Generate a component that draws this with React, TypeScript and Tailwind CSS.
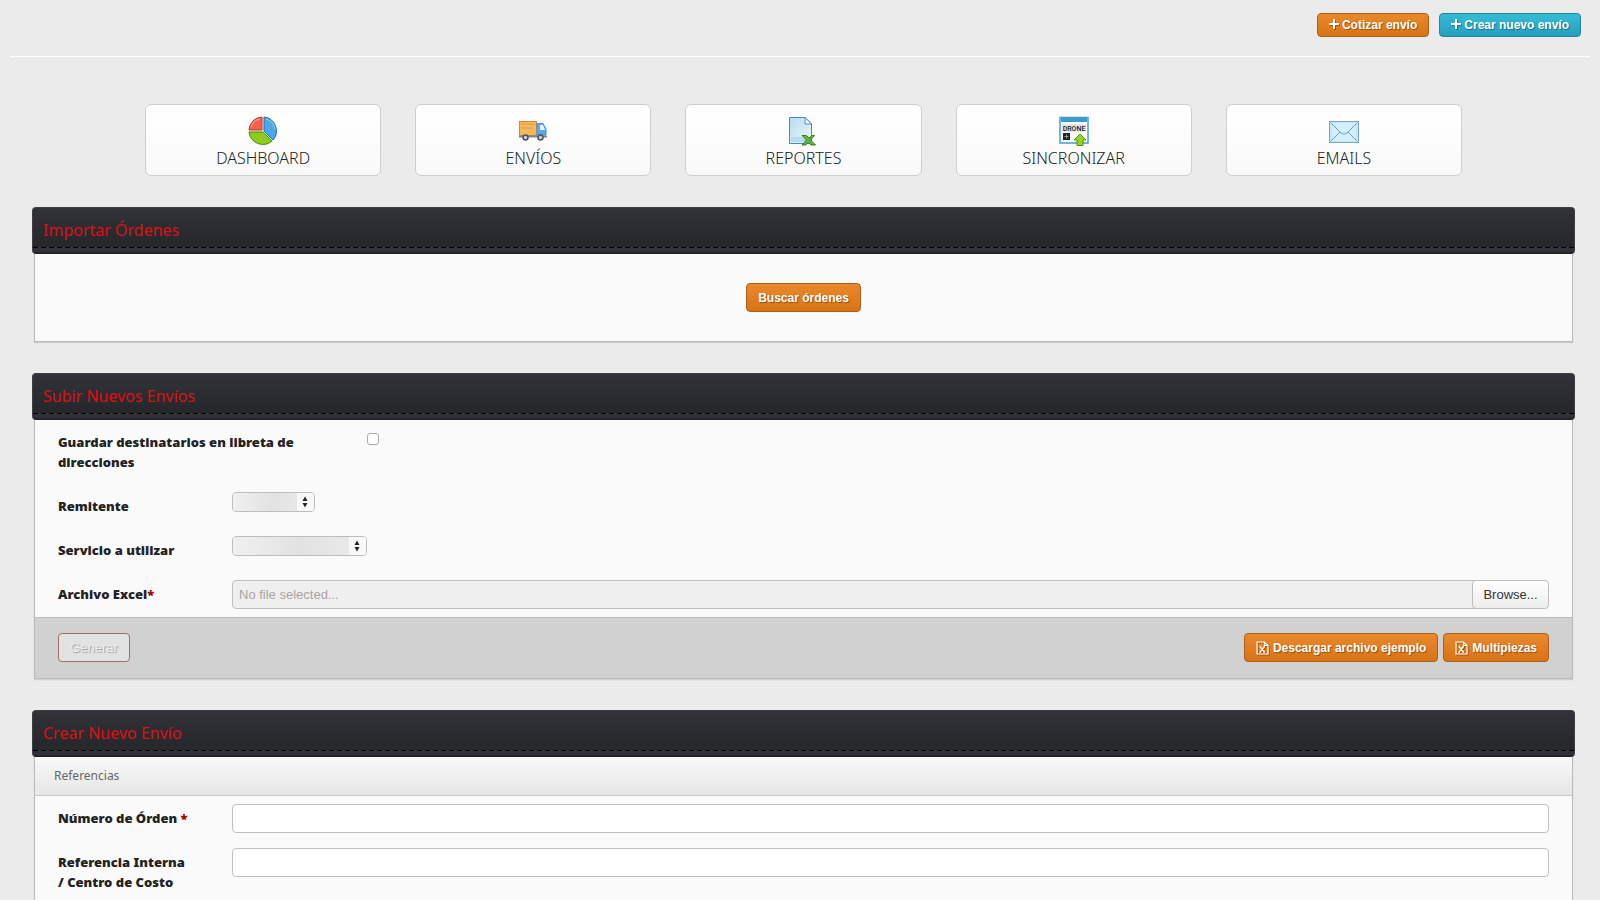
import React from 'react';

interface NavItem {
  label: string;
  icon: React.ReactNode;
}

const PieIcon = () => (
  <svg width="30" height="32" viewBox="0 0 30 32">
    <circle cx="15" cy="16" r="14.5" fill="#e8eef2" />
    <path d="M14 15V2A13.5 13.5 0 0 0 1 15Z" fill="#f4624f" stroke="#c43c2e" />
    <path d="M16 16V2A14 14 0 0 1 25 25Z" fill="#4ba8e6" stroke="#1f6fae" />
    <path d="M14 17H1A14 14 0 0 0 24 26L15 17Z" fill="#8ecb1c" stroke="#4d8a12" />
    <path d="M3 12A12 12 0 0 1 12 4M18 4A12 12 0 0 1 27 14" fill="none" stroke="#fff" strokeOpacity=".45" />
  </svg>
);

const TruckIcon = () => (
  <svg width="30" height="32" viewBox="0 0 30 32">
    <rect x="1.5" y="6.5" width="17" height="14" fill="#f9b65c" stroke="#d08a38" />
    <path d="M3 9H17M3 13H15" stroke="#e09a42" />
    <path d="M19 8.5H25L28 14V20H19Z" fill="#55aaf0" stroke="#4b92d2" />
    <path d="M22 10H25L27 15H22Z" fill="#e4f4fe" />
    <path d="M1 21.5H29" stroke="#7d858f" strokeWidth="2" />
    <circle cx="7.5" cy="22.5" r="2.5" fill="#c9ced4" stroke="#4d545e" strokeWidth="1.5" />
    <circle cx="22.5" cy="22.5" r="2.5" fill="#c9ced4" stroke="#4d545e" strokeWidth="1.5" />
  </svg>
);

const ReportIcon = () => (
  <svg width="30" height="32" viewBox="0 0 30 32">
    <defs>
      <linearGradient id="sheet" x1="0" y1="0" x2="1" y2="1">
        <stop offset="0" stopColor="#b5dcf0" />
        <stop offset="1" stopColor="#eef8fd" />
      </linearGradient>
    </defs>
    <path d="M1.5 2.5H17L23.5 9V28.5H1.5Z" fill="url(#sheet)" stroke="#3e8fc2" />
    <path d="M3 22H22V27H3Z" fill="#b5dcf0" />
    <path d="M17 2.5V9H23.5Z" fill="#fff" stroke="#3e8fc2" />
    <path d="M14 20.5H18.5L21 23L24 20.5H26.500L22.500 25L27.500 30H23L20.500 27.500L17.500 30H14L18.500 25Z" fill="#5fb43a" stroke="#37801f" />
  </svg>
);

const SyncIcon = () => (
  <svg width="30" height="32" viewBox="0 0 30 32">
    <rect x="1" y="2.5" width="28" height="25.5" fill="#fdfeff" stroke="#4a9bcb" strokeWidth="1.5" />
    <rect x="2" y="3" width="26" height="4" fill="#3a9ad2" />
    <rect x="3" y="9" width="24" height="8" fill="#e6e6e6" />
    <text x="15" y="16" textAnchor="middle" fontSize="7" fontWeight="500" fontFamily="Roboto, sans-serif" fill="#222">
      DRONE
    </text>
    <rect x="4" y="18" width="7" height="7" fill="#222" />
    <path d="M5.5 21.5H9.5M7.5 19.5V23.5" stroke="#999" />
    <path d="M21 19L27 25H24V30.5H18V25H15Z" fill="#93d11b" stroke="#55921a" />
  </svg>
);

const MailIcon = () => (
  <svg width="30" height="32" viewBox="0 0 30 32">
    <rect x=".5" y="6.5" width="29" height="21" fill="#bfe6fb" stroke="#7ba6c4" />
    <path d="M3 8H27V26H3Z" fill="#d2effd" />
    <path d="M2 8L12 18Q15 20.5 18 18L28 8M2 26L11 17M28 26L19 17" fill="none" stroke="#6d9dbf" />
  </svg>
);

const ExcelIcon = () => (
  <svg width="13" height="14" viewBox="0 0 13 14" fill="none" stroke="#fff" className="drop-shadow-[1px_1px_0_rgba(0,0,0,0.3)]">
    <path d="M1 1H8.5L12 4.5V13H1ZM8.5 1V4.5H12" strokeWidth="1.2" />
    <path d="M4 5.5L8.5 11M8.5 5.5L4 11M3.5 5.5H5M7.5 5.5H9M3.5 11H5M7.5 11H9" strokeWidth="1.3" />
  </svg>
);

const PlusIcon = () => (
  <svg width="10" height="12" viewBox="0 0 10 12" stroke="#fff" strokeWidth="2" className="drop-shadow-[1px_1px_0_rgba(0,0,0,0.3)]">
    <path d="M5 0V10M0 5H10" />
  </svg>
);

const NAV_ITEMS: NavItem[] = [
  { label: 'DASHBOARD', icon: <PieIcon /> },
  { label: 'ENVÍOS', icon: <TruckIcon /> },
  { label: 'REPORTES', icon: <ReportIcon /> },
  { label: 'SINCRONIZAR', icon: <SyncIcon /> },
  { label: 'EMAILS', icon: <MailIcon /> },
];

const BUTTON =
  'flex items-center justify-center rounded-[4px] border font-["Liberation_Sans",sans-serif] text-[12px] font-bold text-white [text-shadow:1px_1px_1px_rgba(0,0,0,0.35)]';
const ORANGE = 'border-[#a8601d] bg-linear-to-b from-[#e9882c] to-[#d97413]';
const BLUE = 'border-[#2384a0] bg-linear-to-b from-[#36bbd5] to-[#269fc0]';

const LABEL = 'pt-[4px] text-[13px] leading-[20px] font-black text-[#222]';
const TEXT_INPUT = 'block h-[29px] w-full rounded-[4px] border border-[#c0c0c0] bg-white px-2 text-[13px]';

const Panel: React.FC<{ title: string; children: React.ReactNode }> = ({ title, children }) => (
  <section>
    <div className="h-[47px] rounded-[4px] border border-[#3d3f44] border-b-[#202126] bg-linear-to-b from-[#313338] to-[#242529]">
      <h2 className="h-[39px] px-[10px] pt-[10px] text-[16px] leading-[24px] text-[#dd1015]">{title}</h2>
      <div className="h-px bg-[repeating-linear-gradient(90deg,#000_0_5px,#3a3b40_5px_8px)]" />
      <div className="h-[4px] bg-[#303136]" />
    </div>
    <div className="mx-[2px] border border-t-0 border-[#bbb] bg-[#fafafa] shadow-[0_1px_1px_rgba(0,0,0,0.12)]">{children}</div>
  </section>
);

// Select with the value hidden behind a grey smudge
const MaskedSelect: React.FC<{ id: string; className: string }> = ({ id, className }) => (
  <div className={`relative h-[20px] rounded-[4px] border border-[#bdbdbd] bg-[#f8f8f8] ${className}`}>
    <select id={id} className="block h-full w-full appearance-none rounded-[3px] bg-linear-to-r from-[#f0f0f0] via-[#e2e2e2] to-[#ebebeb]" />
    <span className="pointer-events-none absolute inset-y-0 right-0 flex w-[17px] items-center justify-center rounded-r-[3px] bg-[#f8f8f8] pr-[2px]">
      <svg width="6" height="12" viewBox="0 0 6 12" fill="#222">
        <path d="M3 0.5L5.5 5H0.5ZM3 11.5L0.5 7H5.500Z" />
      </svg>
    </span>
  </div>
);

const App: React.FC = () => (
  <div className="min-h-screen bg-[#ebebeb] bg-[repeating-linear-gradient(0deg,#e9e9e9_0_1px,#ededed_1px_2px)] font-['Noto_Sans',sans-serif]">
    <header className="mx-[10px] flex h-[57px] items-start justify-end gap-[10px] border-b border-white pt-[13px] pr-[9px]">
      <button className={`${BUTTON} ${ORANGE} h-[24px] gap-[3px] px-[11px]`}>
        <PlusIcon />
        Cotizar envío
      </button>
      <button className={`${BUTTON} ${BLUE} h-[24px] gap-[3px] px-[11px]`}>
        <PlusIcon />
        Crear nuevo envío
      </button>
    </header>

    <main className="pr-[25px] pb-[30px] pl-[32px]">
      <nav className="grid grid-cols-5 gap-[34px] px-[113px] pt-[47px] pb-[31px]">
        {NAV_ITEMS.map(item => (
          <a
            key={item.label}
            href="#"
            className="flex h-[72px] flex-col items-center rounded-[6px] border border-[#cfcfcf] bg-linear-to-b from-white to-[#f9f9f9] pt-[10px] text-[#222]"
          >
            {item.icon}
            <span className="text-[16px] leading-[22px] font-light">{item.label}</span>
          </a>
        ))}
      </nav>

      <div className="flex flex-col gap-[31px]">
        <Panel title="Importar Órdenes">
          <div className="flex justify-center py-[29px]">
            <button className={`${BUTTON} ${ORANGE} h-[29px] px-[11px]`}>Buscar órdenes</button>
          </div>
        </Panel>

        <Panel title="Subir Nuevos Envíos">
          <form>
            <div className="flex flex-col px-[23px]">
              <div className="flex h-[64px] items-start pt-[8px]">
                <label htmlFor="guardar" className={`${LABEL} w-[309px] pr-[60px]`}>
                  Guardar destinatarios en libreta de direcciones
                </label>
                <input
                  id="guardar"
                  type="checkbox"
                  className="mt-[5px] size-[12px] appearance-none rounded-[3px] border border-[#a8a8a8] bg-white"
                />
              </div>
              <div className="flex h-[44px] items-start pt-[8px]">
                <label htmlFor="remitente" className={`${LABEL} w-[174px]`}>
                  Remitente
                </label>
                <MaskedSelect id="remitente" className="w-[83px]" />
              </div>
              <div className="flex h-[44px] items-start pt-[8px]">
                <label htmlFor="servicio" className={`${LABEL} w-[174px]`}>
                  Servicio a utilizar
                </label>
                <MaskedSelect id="servicio" className="w-[135px]" />
              </div>
              <div className="flex h-[45px] items-start pt-[8px]">
                <label htmlFor="archivo" className={`${LABEL} w-[174px]`}>
                  Archivo Excel<span className="text-[#a00]">*</span>
                </label>
                <div className="flex flex-1 font-['Liberation_Sans',sans-serif] text-[13px]">
                  <input
                    id="archivo"
                    readOnly
                    placeholder="No file selected..."
                    className="-mr-1 h-[29px] flex-1 rounded-l-[4px] border border-[#bfbfbf] bg-[#efefef] px-[6px] placeholder:text-[#a5a5a5]"
                  />
                  <button
                    type="button"
                    className="h-[29px] w-[77px] rounded-[4px] border border-[#bdbdbd] bg-linear-to-b from-white to-[#ededed] text-[#333]"
                  >
                    Browse...
                  </button>
                </div>
              </div>
            </div>
            <div className="flex h-[61px] items-start gap-[5px] border-t border-[#bbb] bg-[#d1d1d1] px-[23px] pt-[15px]">
              <button
                type="button"
                disabled
                className="mr-auto h-[29px] w-[72px] rounded-[4px] border border-[#a56a6a] bg-[#e2e2e2] font-['Liberation_Sans',sans-serif] text-[13px] text-[#eee] [text-shadow:1px_1px_1px_rgba(0,0,0,0.3)]"
              >
                Generar
              </button>
              <button type="button" className={`${BUTTON} ${ORANGE} h-[29px] gap-[4px] px-[11px]`}>
                <ExcelIcon />
                Descargar archivo ejemplo
              </button>
              <button type="button" className={`${BUTTON} ${ORANGE} h-[29px] gap-[4px] px-[11px]`}>
                <ExcelIcon />
                Multipiezas
              </button>
            </div>
          </form>
        </Panel>

        <Panel title="Crear Nuevo Envío">
          <h3 className="flex h-[39px] items-center border-b border-[#c8c8c8] bg-linear-to-b from-[#f8f8f8] to-[#e6e6e6] px-[19px] text-[12px] text-[#666]">
            Referencias
          </h3>
          <form className="flex flex-col px-[23px] pb-[30px]">
            <div className="flex h-[44px] items-start pt-[8px]">
              <label htmlFor="orden" className={`${LABEL} w-[174px]`}>
                Número de Órden <span className="text-[#a00]">*</span>
              </label>
              <div className="flex-1">
                <input id="orden" className={TEXT_INPUT} />
              </div>
            </div>
            <div className="flex items-start pt-[8px]">
              <label htmlFor="referencia" className={`${LABEL} w-[174px]`}>
                Referencia Interna
                <br />/ Centro de Costo
              </label>
              <div className="flex-1">
                <input id="referencia" className={TEXT_INPUT} />
              </div>
            </div>
          </form>
        </Panel>
      </div>
    </main>
  </div>
);

export default App;
